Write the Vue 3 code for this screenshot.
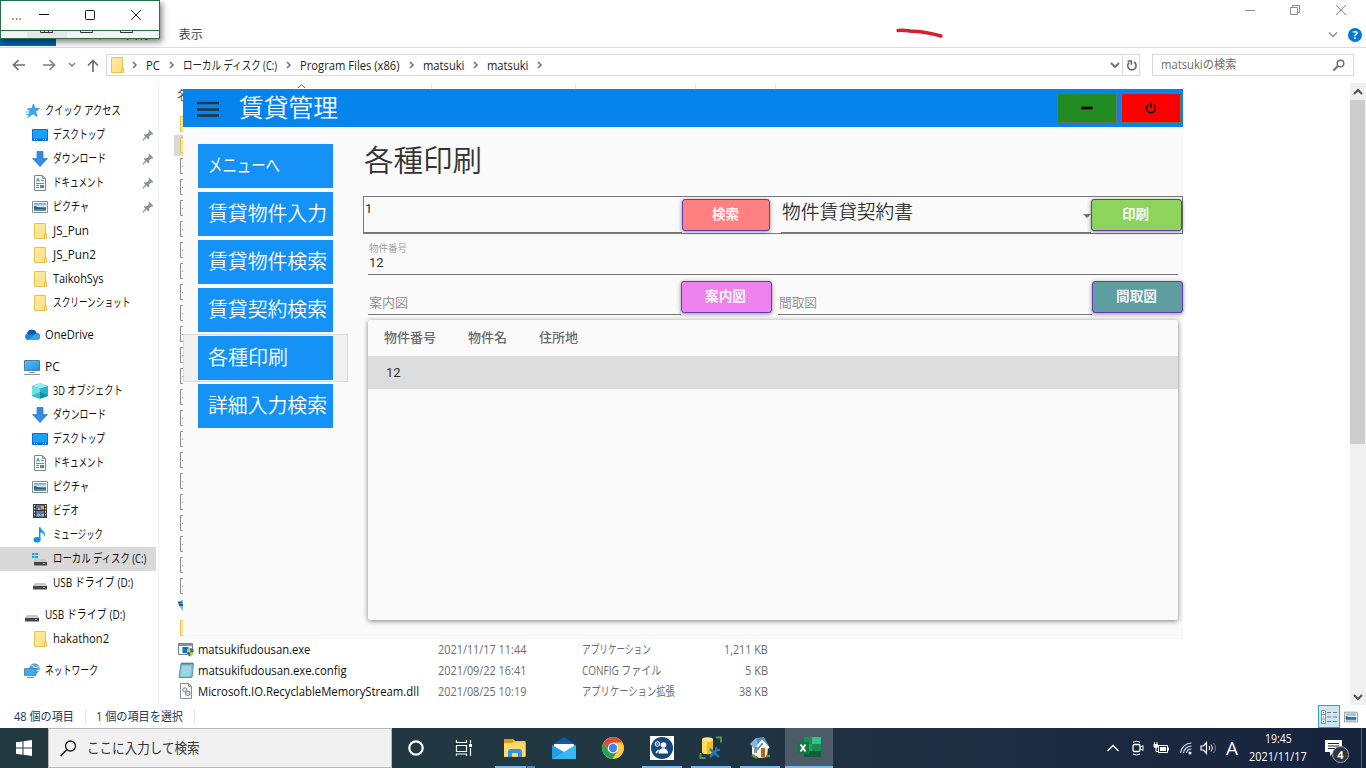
<script setup>
// v-fit="n": condenses or widens a label so that it is n pixels wide.
const vFit = {
  mounted(el, { value }) {
    if (!value) return
    const natural = el.offsetWidth
    el.style.transform = `scaleX(${value / natural})`
    el.style.marginRight = `${value - natural}px`
  },
}

const crumbs = [
  { t: 'PC', w: 14 },
  { t: 'ローカル ディスク (C:)', w: 94 },
  { t: 'Program Files (x86)', w: 100 },
  { t: 'matsuki', w: 41 },
  { t: 'matsuki', w: 41 },
]

const nav = [
  { t: 'クイック アクセス', w: 76, i: 'star', top: true },
  { t: 'デスクトップ', w: 52, i: 'desktop', pin: true },
  { t: 'ダウンロード', w: 53, i: 'down', pin: true },
  { t: 'ドキュメント', w: 51, i: 'doc', pin: true },
  { t: 'ピクチャ', w: 36, i: 'pic', pin: true },
  { t: 'JS_Pun', w: 36, i: 'folder' },
  { t: 'JS_Pun2', w: 43, i: 'folder' },
  { t: 'TaikohSys', w: 51, i: 'folder' },
  { t: 'スクリーンショット', w: 77, i: 'folder' },
  { t: 'OneDrive', w: 49, i: 'cloud', top: true, gap: true },
  { t: 'PC', w: 15, i: 'pc', top: true, gap: true },
  { t: '3D オブジェクト', w: 70, i: 'cube' },
  { t: 'ダウンロード', w: 53, i: 'down' },
  { t: 'デスクトップ', w: 52, i: 'desktop' },
  { t: 'ドキュメント', w: 51, i: 'doc' },
  { t: 'ピクチャ', w: 36, i: 'pic' },
  { t: 'ビデオ', w: 26, i: 'video' },
  { t: 'ミュージック', w: 50, i: 'music' },
  { t: 'ローカル ディスク (C:)', w: 93, i: 'cdrive', sel: true },
  { t: 'USB ドライブ (D:)', w: 80, i: 'drive' },
  { t: 'USB ドライブ (D:)', w: 80, i: 'drive', top: true, gap: true },
  { t: 'hakathon2', w: 56, i: 'folder' },
  { t: 'ネットワーク', w: 53, i: 'network', top: true, gap: true },
]

const hidden = Array.from({ length: 25 }, (_, k) => {
  if (k < 2 || k === 24) return 'folder'
  return k === 23 ? 'gem' : 'file'
})
const files = [
  { i: 'exe', n: 'matsukifudousan.exe', nw: 112, d: '2021/11/17 11:44', t: 'アプリケーション', tw: 69, s: '1,211 KB', sw: 44 },
  { i: 'note', n: 'matsukifudousan.exe.config', nw: 149, d: '2021/09/22 16:41', t: 'CONFIG ファイル', tw: 79, s: '5 KB', sw: 23 },
  { i: 'dll', n: 'Microsoft.IO.RecyclableMemoryStream.dll', nw: 221, d: '2021/08/25 10:19', t: 'アプリケーション拡張', tw: 93, s: '38 KB', sw: 29 },
]

const menu = [
  { t: 'メニューへ', w: 72 },
  { t: '賃貸物件入力', w: 119 },
  { t: '賃貸物件検索', w: 119 },
  { t: '賃貸契約検索', w: 119 },
  { t: '各種印刷', w: 80, on: true },
  { t: '詳細入力検索', w: 119 },
]

const tasks = [
  { i: 'cortana' },
  { i: 'taskview' },
  { i: 'explorer', run: true, multi: true },
  { i: 'mail' },
  { i: 'chrome' },
  { i: 'people', run: true },
  { i: 'db', run: true },
  { i: 'house', run: true },
  { i: 'excel', active: true },
]
</script>

<template>
  <div class="desk">
    <svg class="defs" width="0" height="0">
      <defs>
        <linearGradient id="gf" x1="0" y1="0" x2="1" y2="1"><stop offset="0" stop-color="#ffeaa0" /><stop offset="1" stop-color="#ffdf80" /></linearGradient>
        <linearGradient id="gb" x1="0" y1="0" x2="1" y2="1"><stop offset="0" stop-color="#5fc0f8" /><stop offset="1" stop-color="#1690e8" /></linearGradient>
        <linearGradient id="gp" x1="0" y1="0" x2="0" y2="1"><stop offset="0" stop-color="#5ba7e8" /><stop offset=".45" stop-color="#dcecf5" /><stop offset=".6" stop-color="#386c78" /><stop offset="1" stop-color="#5f9fc9" /></linearGradient>
      </defs>
      <symbol id="folder" viewBox="0 0 16 16"><path d="M2.500.5h11v10.500h1v4.500h-12z" fill="url(#gf)" stroke="#e8c34e" /><path d="M12.500 15.500v-4.500h2" fill="none" stroke="#e8c34e" /></symbol>
      <symbol id="star" viewBox="0 0 16 16"><path d="M9.500 1l1.200 4.500 4.800-.1-4 3 1.700 5.100-4.200-2.700-4.500 3.200 1.600-5.300L4 5.700l4.100-.2z" fill="#35aaf0" stroke="#1983cc" stroke-width=".7" /><path d="M2.500 6.500H6M1.500 9H6M2 11.500h3M3 14h2" stroke="#54b8f4" /></symbol>
      <symbol id="desktop" viewBox="0 0 16 16"><path d="M.5 2.500h15v11H.5z" fill="#18a1f5" stroke="#0874c8" /><path d="M1 11.500h14v2H1z" fill="#086fb9" /><path d="M2 12.500h1m1 0h1m6 0h1m1 0h1" stroke="#a8ddff" /></symbol>
      <symbol id="down" viewBox="0 0 16 16"><path d="M5 .5h6v7h4.500L8 15.500.5 7.500H5z" fill="#318ddf" stroke="#2876c4" stroke-width=".7" /></symbol>
      <symbol id="doc" viewBox="0 0 16 16"><path d="M2.500.5h8l3 3v12h-11z" fill="#fff" stroke="#868686" /><path d="M10.500.5v3h3" fill="none" stroke="#888" /><path d="M4.500 6.500l1.500-3.500 1.500 3.500m-2.500-1h2M9 5.500h3M4 8.500h8M4 10.500h3M4 12.500h3" stroke="#3a8bc8" fill="none" stroke-width=".9" /><path d="M8 10h4v3H8z" fill="#4a86a8" /></symbol>
      <symbol id="pic" viewBox="0 0 16 16"><path d="M.5 2.500h15v11H.5z" fill="#fff" stroke="#8d8d8d" /><path d="M2 4h12v8H2z" fill="url(#gp)" /><path d="M2 7c3 0 4 2 7 2h5v1H2z" fill="#2f6370" /></symbol>
      <symbol id="cloud" viewBox="0 0 16 16"><path d="M3.500 13A3.500 3.500 0 0 1 3 6.500 5 5 0 0 1 12.500 6 3.500 3.500 0 0 1 13 13z" fill="#1687dc" /><path d="M3 6.500A5 5 0 0 1 12.500 6l-5 2z" fill="#0a59af" /><path d="M4 13l7-5.500c3-1 5 1 5 3A3 3 0 0 1 13 13z" fill="#31a8ee" /></symbol>
      <symbol id="pc" viewBox="0 0 16 16"><path d="M.5 1.500h15v10H.5z" fill="url(#gb)" stroke="#527f9d" /><path d="M5 13.500h6M0 15.500h16" stroke="#8996a0" /></symbol>
      <symbol id="cube" viewBox="0 0 16 16"><path d="M0 3l8-2.800L16 3v10l-8 2.800L0 13z" fill="#26b5c8" /><path d="M0 3l8-2.800L16 3 8 5.500z" fill="#9ce9ec" /><path d="M0 3l8 2.500V15.800L0 13z" fill="#6fe0e8" /><path d="M8 9l8 3.500v.5l-8 2.800z" fill="#138ca7" /><path d="M0 12.500L8 9v6.800L0 13z" fill="#3cb9cb" /></symbol>
      <symbol id="video" viewBox="0 0 16 16"><path d="M1 1h14v14H1z" fill="#3b3b3b" /><path d="M4 2h8v5H4z" fill="#4770c7" /><path d="M4 8h8v6H4z" fill="#4d76bb" /><path d="M6 5h2v2H6zm3-2h3v3H9zM5 11h3v2H5zm4 0h3v2H9z" fill="#e1ac27" /><path d="M2.500 2v12M13.500 2v12" stroke="#f4f4f4" stroke-dasharray="1.500 1.500" /></symbol>
      <symbol id="music" viewBox="0 0 16 16"><ellipse cx="5" cy="12.800" rx="3.500" ry="2.800" fill="#0d94ea" /><path d="M7 .3h1.500c.5 4 6.500 4 3.800 10 .3-3.500-1.800-4.500-3.800-5v7.500H7z" fill="#0d94ea" /></symbol>
      <symbol id="drive" viewBox="0 0 16 16"><path d="M3 8h10l2 3H1z" fill="#c7cacb" /><path d="M1 11h14v3.500H1z" fill="#434749" /><path d="M11 12.500h2" stroke="#58da7b" /></symbol>
      <symbol id="cdrive" viewBox="0 0 16 16"><path d="M3 8h10l2 3H1z" fill="#c7cacb" /><path d="M2 11h13v3.500H2z" fill="#434749" /><path d="M11 12.500h2" stroke="#58da7b" /><path d="M0 2h2.500v2H0zm3.200 0H6v2H3.200zM0 5h2.500v2H0zm3.200 0H6v2.300H3.200z" fill="#16a5ee" /></symbol>
      <symbol id="network" viewBox="0 0 16 16"><circle cx="10.500" cy="5.500" r="5.200" fill="#5ba3cf" /><path d="M7 2c3 0 2 2.500 4 2.500s3-1 4-.5M12 8c1-1 2 0 3-1" stroke="#c5e4f0" fill="none" stroke-width="1.200" /><path d="M.5 5.500h11.500v7H.5z" fill="#39aef2" stroke="#4d7d9e" stroke-width=".8" /><path d="M3 14.500h7" stroke="#738997" /></symbol>
      <symbol id="pin" viewBox="0 0 12 12"><path d="M7.300.8l4 4-.9.900-1.200-.2-2 2 .1 2-1 1-4.500-4.500 1-1 2.200.1 1.900-1.900-.4-1.600z" fill="#89939c" /><path d="M4 8L.8 11.300" stroke="#89939c" stroke-width="1.200" /></symbol>
      <symbol id="file" viewBox="0 0 16 16"><path d="M2.500.5h8l3 3v12h-11z" fill="#fff" stroke="#8c8c8c" /><path d="M4 8.500h6" stroke="#888" /></symbol>
      <symbol id="gem" viewBox="0 0 16 16"><path d="M0 5l4-4h8l3 3-7 11-4-4z" fill="#7fb4dc" /><path d="M0 3.500h4M1 6h4" stroke="#2d5f92" stroke-width="1.800" /></symbol>
      <symbol id="exe" viewBox="0 0 16 16"><path d="M.5 2.500h14v11H.5z" fill="#f5f5f5" stroke="#75818b" /><path d="M1 3h13v2H1z" fill="#89959e" /><path d="M4.500 6h6v6h-6z" fill="#0b72cf" /><path d="M9 8l3-1 3.500 1v3c0 2-1 3.500-3.500 4.500-2-1-3-2.500-3-4.500z" fill="#f4bd26" /><path d="M12.200 7l3.300 1v3.200h-3.300zM9 11.200h3.200v4.200c-2-1-3.200-2.200-3.200-4.200z" fill="#1679bc" /></symbol>
      <symbol id="note" viewBox="0 0 16 16"><path d="M3 1.500h12.500l-1.500 14H1z" fill="#81c5d3" stroke="#4f99aa" /><path d="M4 5h9M4 7h9M3.500 9h9M3 11h9M3 13h9" stroke="#b8e7ee" /><path d="M4 .3v2.500m2-2.500v2.500m2-2.500v2.500m2-2.500v2.500m2-2.500v2.500m2-2.500v2.500" stroke="#52666b" stroke-width=".8" /></symbol>
      <symbol id="dll" viewBox="0 0 16 16"><path d="M2.500.5h8l3 3v12h-11z" fill="#fff" stroke="#8c8c8c" /><path d="M10.500.5v3h3" stroke="#8c8c8c" fill="none" /><circle cx="6.800" cy="6.800" r="2" fill="#dfe8ee" stroke="#95a3ae" stroke-width="1.200" /><circle cx="9.800" cy="10.300" r="2.200" fill="#dfe8ee" stroke="#8398a8" stroke-width="1.200" /></symbol>

      <symbol id="cortana" viewBox="0 0 24 24"><circle cx="12" cy="12" r="6.700" fill="none" stroke="#fff" stroke-width="2.200" /></symbol>
      <symbol id="taskview" viewBox="0 0 24 24"><path d="M4.500 4v2.500h10V4M4.500 9.500h10v6h-10zM4.500 20v-2h10v2M18.500 4v3.500m0 4.500v8" fill="none" stroke="#fff" stroke-width="1.200" /><path d="M17 8h3v3h-3z" fill="#fff" /></symbol>
      <symbol id="explorer" viewBox="0 0 24 24"><path d="M1 3h9l2 2h10.500v16H1z" fill="#ffca43" /><path d="M1 3h8l2 2-2 2H1z" fill="#dc9b10" /><path d="M1 7h21.500v13H1z" fill="#ffda72" /><path d="M5 21v-5q0-3 3-3h8q3 0 3 3v5h-4v-4H9v4z" fill="#2e96e6" /></symbol>
      <symbol id="mail" viewBox="0 0 24 24"><path d="M0 9l12-8 12 8v3H0z" fill="#0a5ca9" /><path d="M2 8h20v9H2z" fill="#fff" /><path d="M0 9l12 7L24 9v14H0z" fill="#239be4" /><path d="M0 23L24 9v14z" fill="#39b7f4" /></symbol>
      <symbol id="chrome" viewBox="0 0 24 24"><circle cx="12" cy="12" r="11" fill="#ffcd3f" /><path d="M2.500 6.500A11 11 0 0 1 21.500 6.500H12l-5 8z" fill="#dd4c3d" /><path d="M2.500 6.500A11 11 0 0 0 11.500 23l5-8.300L12 17l-5-2.500z" fill="#24a15c" /><circle cx="12" cy="12" r="5.300" fill="#fff" /><circle cx="12" cy="12" r="4.200" fill="#4484ed" /></symbol>
      <symbol id="people" viewBox="0 0 24 24"><path d="M0 0h24v24H0z" fill="#fff" /><circle cx="12" cy="12" r="11" fill="#14497c" /><circle cx="13.500" cy="9" r="2.800" fill="#fff" /><path d="M8.500 17.500c0-7 9.500-7 9.500 0z" fill="#fff" /><circle cx="7.500" cy="8" r="2.300" fill="none" stroke="#fff" /><path d="M6.500 8h2" stroke="#fff" /><path d="M6 17l2.500-3" stroke="#fff" stroke-width="1.500" /></symbol>
      <symbol id="db" viewBox="0 0 24 24"><path d="M3 3v13c0 3 11 3 11 0V3z" fill="#f2bd1b" /><path d="M3 4v12c0 2 4 2 5 2V5z" fill="#ffe05b" /><ellipse cx="8.500" cy="3.500" rx="5.500" ry="2.300" fill="#ffe783" /><path d="M17 1.500h5v5M1.500 17v5h5" stroke="#519746" stroke-width="2" fill="none" /><path d="M11 13l9 8M19 13l-8 8" stroke="#2178bb" stroke-width="2.500" /><path d="M17 11v3h4" fill="none" stroke="#2178bb" stroke-width="2" /></symbol>
      <symbol id="house" viewBox="0 0 24 24"><path d="M4 10l12-3 4 5-1 9-8 1-7-4z" fill="#fff1dc" /><path d="M2 8l6-6 8-1 5 9-5-3-7 8z" fill="#5390c8" /><path d="M2 8l6-6 2 7-4 3z" fill="#85b6dc" /><path d="M9 11l5-6 7 7" fill="none" stroke="#fff" stroke-width="2" /><path d="M13 12h4v9h-4z" fill="#b96227" /><path d="M6 13h3v4H6z" fill="#8a96a0" /><path d="M4 19l5 3M18 20h4" stroke="#51a043" stroke-width="2.500" /></symbol>
      <symbol id="excel" viewBox="0 0 24 24"><path d="M7 1h17v20H7z" fill="#21a366" /><path d="M7 1h8v7H7z" fill="#169154" /><path d="M15 1h9v7h-9z" fill="#33c481" /><path d="M15 8h9v7h-9z" fill="#188c54" /><path d="M7 15h17v6H7z" fill="#125e3c" /><path d="M0 6h12v12H0z" fill="#107c41" /><path d="M3.500 8.500l5 7m0-7l-5 7" stroke="#fff" stroke-width="1.800" /></symbol>
    </svg>

    <section class="explorer">
      <header class="ribbon">
        <div class="sysbtns">
          <svg width="12" height="12"><path d="M1 6.500h10" stroke="#8a8a8a" /></svg>
          <svg width="12" height="12"><path d="M1.500 3.500h7v7h-7zM3.500 3.500v-2h7v7h-2" stroke="#8a8a8a" fill="none" /></svg>
          <svg width="12" height="12"><path d="M1 1l10 10M11 1L1 11" stroke="#8a8a8a" /></svg>
        </div>
        <div class="tabs">
          <div class="filetab"><span v-fit="38">ファイル</span></div>
          <span class="t1" v-fit="28">ホーム</span>
          <span class="t2" v-fit="24">共有</span>
          <span v-fit="24">表示</span>
          <svg class="stroke" width="50" height="12"><path d="M3 2.500c6-1 10 .5 16 .8s16 1.700 27 4.700" stroke="#e01b2b" stroke-width="3.400" fill="none" stroke-linecap="round" /></svg>
          <div class="helpers">
            <svg width="10" height="6"><path d="M1 .5l4 4 4-4" stroke="#8c8c8c" stroke-width="1.300" fill="none" /></svg>
            <span class="help">?</span>
          </div>
        </div>
      </header>

      <div class="address">
        <div class="arrows">
          <svg width="14" height="12"><path d="M1.500 6H13M6.500 1l-5 5 5 5" stroke="#707070" stroke-width="1.700" fill="none" /></svg>
          <svg width="14" height="12"><path d="M1 6h11.500M7.500 1l5 5-5 5" stroke="#808080" stroke-width="1.700" fill="none" /></svg>
          <svg width="8" height="6"><path d="M1 1l3 3 3-3" stroke="#808080" stroke-width="1.500" fill="none" /></svg>
          <svg width="12" height="13"><path d="M6 1.500V13M1 6.500l5-5 5 5" stroke="#707070" stroke-width="1.700" fill="none" /></svg>
        </div>
        <div class="path">
          <svg width="16" height="16"><use href="#folder" /></svg>
          <template v-for="(c, k) in crumbs" :key="k">
            <svg class="chev" width="6" height="8"><path d="M1 1l3 3-3 3" stroke="#707070" stroke-width="1.500" fill="none" /></svg>
            <span v-fit="c.w">{{ c.t }}</span>
          </template>
          <svg class="chev" width="6" height="8"><path d="M1 1l3 3-3 3" stroke="#707070" stroke-width="1.500" fill="none" /></svg>
          <div class="pathend">
            <svg width="10" height="7"><path d="M1 1l4 4 4-4" stroke="#707070" stroke-width="1.900" fill="none" /></svg>
            <i></i>
            <svg width="12" height="13"><path d="M8 3a4.200 4.200 0 1 1-5 .6M1.500 2h3.800v3.800" stroke="#606060" stroke-width="1.500" fill="none" /></svg>
          </div>
        </div>
        <div class="find">
          <span v-fit="75">matsukiの検索</span>
          <svg width="12" height="12"><circle cx="7.500" cy="4.500" r="3.300" fill="none" stroke="#707070" stroke-width="1.500" /><path d="M5 7l-4.500 4.500" stroke="#707070" stroke-width="2" /></svg>
        </div>
      </div>

      <div class="body">
        <nav class="tree">
          <div v-for="(n, k) in nav" :key="k" class="node" :class="{ top: n.top, gap: n.gap, sel: n.sel }">
            <svg width="16" height="16"><use :href="'#' + n.i" /></svg>
            <span v-fit="n.w">{{ n.t }}</span>
            <svg v-if="n.pin" class="pin" width="12" height="12"><use href="#pin" /></svg>
          </div>
        </nav>
        <div class="list">
          <div class="heads">
            <span class="nm" v-fit="24">名前</span>
            <svg width="9" height="6"><path d="M1 5l3.500-3.500L8 5" stroke="#555" fill="none" /></svg>
            <i></i><i></i><i></i><i></i>
          </div>
          <div v-for="(h, k) in hidden" :key="'h' + k" class="row" :class="{ hit: k === 1 }">
            <svg width="16" height="16"><use :href="'#' + h" /></svg>
          </div>
          <div v-for="f in files" :key="f.n" class="row">
            <svg width="16" height="16"><use :href="'#' + f.i" /></svg>
            <div class="name"><span v-fit="f.nw">{{ f.n }}</span></div>
            <div class="cell"><span v-fit="88">{{ f.d }}</span></div>
            <div class="cell"><span v-fit="f.tw">{{ f.t }}</span></div>
            <div class="size"><span v-fit="f.sw">{{ f.s }}</span></div>
          </div>
          <div class="row last"><svg width="16" height="16"><use href="#file" /></svg></div>
        </div>
        <div class="scroll">
          <svg width="16" height="17"><path d="M4 11l4-4 4 4" stroke="#505050" stroke-width="2" fill="none" /></svg>
          <div class="thumb"></div>
          <svg class="sd" width="16" height="16"><path d="M4 6l4 4 4-4" stroke="#505050" stroke-width="2" fill="none" /></svg>
        </div>
      </div>

      <footer class="status">
        <span v-fit="60">48 個の項目</span><i></i>
        <span v-fit="87">1 個の項目を選択</span><i></i>
        <div class="views">
          <div class="von"><svg width="16" height="14"><path d="M.5.500h4v13h-4zM.5 4.500h4M.5 9h4" stroke="#8a8a8a" fill="#fff" /><path d="M6 2.500h4m2 0h4M6 7h4m2 0h4M6 11.500h4m2 0h4" stroke="#777" /><path d="M2 2.500h1" stroke="#2a9a50" /><path d="M2 7h1" stroke="#278be6" /><path d="M2 11.500h1" stroke="#d33" /></svg></div>
          <svg width="14" height="14"><use href="#pic" /></svg>
        </div>
      </footer>
    </section>

    <section class="app">
      <header class="bar">
        <svg width="24" height="18"><path d="M1 3h22M1 9.500h22M1 15.500h22" stroke="#2d3135" stroke-width="2.400" /></svg>
        <h1><span v-fit="99">賃貸管理</span></h1>
        <button class="min"><svg width="12" height="4"><path d="M.5 2h11" stroke="#000" stroke-width="2.600" /></svg></button>
        <button class="off"><svg width="12" height="12"><path d="M3.500 2.500a4.500 4.500 0 1 0 5 0M6 .5v5.500" stroke="#000" stroke-width="1.400" fill="none" /></svg></button>
      </header>
      <div class="main">
        <aside>
          <div v-for="m in menu" :key="m.t" class="mi" :class="{ on: m.on }">
            <div class="mb"><span v-fit="m.w">{{ m.t }}</span></div>
          </div>
        </aside>
        <div class="pane">
          <h2><span v-fit="118">各種印刷</span></h2>
          <div class="query">
            <div class="in one">1</div>
            <button class="b red"><span v-fit="27">検索</span></button>
            <div class="in combo"><span v-fit="131">物件賃貸契約書</span><svg width="8" height="4"><path d="M0 0h8L4 4z" fill="#757575" /></svg></div>
            <button class="b green"><span v-fit="27">印刷</span></button>
          </div>
          <div class="field">
            <label><span v-fit="38">物件番号</span></label>
            <div>12</div>
          </div>
          <div class="maps">
            <div class="mf a"><span v-fit="39">案内図</span></div>
            <button class="b violet"><span v-fit="41">案内図</span></button>
            <div class="mf c"><span v-fit="38">間取図</span></div>
            <button class="b teal"><span v-fit="41">間取図</span></button>
          </div>
          <div class="card">
            <div class="th"><span v-fit="52">物件番号</span><span v-fit="39">物件名</span><span v-fit="39">住所地</span></div>
            <div class="tr">12</div>
          </div>
        </div>
      </div>
    </section>

    <section class="mini">
      <div class="mt">
        <span>...</span>
        <svg width="12" height="12"><path d="M1 5.500h10" stroke="#111" /></svg>
        <svg width="12" height="12"><rect x="1.500" y="1.500" width="9" height="9" rx="1" stroke="#111" fill="none" /></svg>
        <svg width="12" height="12"><path d="M1 1l10 10M11 1L1 11" stroke="#222" /></svg>
      </div>
      <div class="ms">
        <div class="mk"><svg width="14" height="3"><path d="M.5 0v1.500h12V0M4.500 0v1.500M8.500 0v1.500" stroke="#333" fill="none" /></svg></div>
        <svg width="14" height="3"><path d="M.5 0v1.500h12V0" stroke="#333" fill="none" /></svg>
        <svg width="14" height="3"><path d="M.5 0v1.500h12V0" stroke="#333" fill="none" /></svg>
      </div>
    </section>

    <footer class="taskbar">
      <div class="start"><svg width="16" height="16"><path d="M0 2.300L6.500 1.400V7.500H0zM7.500 1.200L16 0v7.500H7.500zM0 8.500h6.500v6.200L0 13.700zM7.500 8.500H16V16l-8.500-1.200z" fill="#fff" /></svg></div>
      <div class="search">
        <svg width="17" height="17"><circle cx="10.500" cy="6" r="5" fill="none" stroke="#1b1b1b" stroke-width="1.300" /><path d="M7 9.500L.7 16" stroke="#1b1b1b" stroke-width="1.500" /></svg>
        <span v-fit="113">ここに入力して検索</span>
      </div>
      <div class="tasks">
        <div v-for="t in tasks" :key="t.i" class="task" :class="[t.i, { run: t.run, active: t.active }]">
          <svg width="24" height="24"><use :href="'#' + t.i" /></svg>
          <i v-if="t.multi"></i>
        </div>
      </div>
      <div class="tray">
        <svg width="14" height="8"><path d="M1.500 7L7 1.500 12.500 7" stroke="#fff" stroke-width="1.300" fill="none" /></svg>
        <svg width="12" height="16"><rect x="1" y="4.500" width="7" height="7" rx="1.500" stroke="#fff" stroke-width="1.300" fill="none" /><path d="M8 7.500l3-2v5l-3-2M1 2.200q3.500-2 7 0M1 14q3.500 2 7 0" stroke="#fff" fill="none" /></svg>
        <svg width="16" height="12"><path d="M5.500 3.500h9v7h-9zM15.500 5.500v3" stroke="#fff" fill="none" /><path d="M7 5h6v4H7zM.5 2h4.500v3L3 6.500.5 5z" fill="#fff" /><path d="M1.500 0v2M4 0v2M3 6v3.500h2" stroke="#fff" fill="none" /></svg>
        <svg width="14" height="14"><path d="M1.500 12A11 11 0 0 1 12.500 2M4.500 12A8 8 0 0 1 12.500 5M7.500 12A5 5 0 0 1 12.500 8" stroke="#d7dce4" stroke-width="1.200" fill="none" /><circle cx="11" cy="12" r="1.500" fill="#fff" /></svg>
        <svg width="17" height="14"><path d="M1 5h2.500l3-3.500v11L3.500 9H1z" stroke="#fff" fill="none" stroke-width="1.200" /><path d="M9 5q1.500 2 0 4M11 3.500q3 3.500 0 7" stroke="#fff" fill="none" /><path d="M13.500 2q4 5 0 10" stroke="#7b8495" fill="none" /></svg>
        <span class="ime">A</span>
        <div class="clock"><span v-fit="27">19:45</span><span v-fit="58">2021/11/17</span></div>
        <div class="note">
          <svg width="17" height="16"><path d="M0 0h17v12H9l-4 4v-4H0z" fill="#fff" /><path d="M3 3.500h11M3 6h11M3 8.500h7" stroke="#18243c" /></svg>
          <b>4</b>
        </div>
        <i></i>
      </div>
    </footer>
  </div>
</template>

<style>
html, body { margin: 0; overflow: hidden; background: #fff; }
</style>

<style scoped>
* { box-sizing: border-box; }
svg { display: block; flex: none; }
button { font: inherit; margin: 0; padding: 0; border: 0; display: flex; align-items: center; justify-content: center; flex: none; }
span { display: inline-block; white-space: nowrap; transform-origin: 0 50%; flex: none; }
.desk { position: relative; width: 1366px; height: 768px; overflow: hidden; display: flex; flex-direction: column; font: 12px/16px "Open Sans", "Noto Sans CJK JP", sans-serif; color: #111; background: #fff; }
.defs { position: absolute; }

.explorer { height: 728px; display: flex; flex-direction: column; }
.ribbon { height: 48px; border-bottom: 1px solid #dadbdc; flex: none; }
.sysbtns { height: 23px; display: flex; justify-content: flex-end; gap: 34px; padding: 4px 19px 0 0; }
.sysbtns svg:first-child { margin-right: -1px; }
.tabs { height: 24px; display: flex; align-items: center; padding-right: 4px; color: #444; }
.filetab { width: 56px; height: 23px; background: #0063b1; color: #fff; padding: 3px 9px; margin-right: 17px; align-self: flex-start; }
.t1 + .t2 { margin-left: 25px; }
.t2 + span { margin-left: 29px; }
.stroke { margin: -2px 0 0 692px; }
.helpers { margin-left: auto; display: flex; align-items: center; gap: 10px; }
.help { width: 14px; height: 14px; border-radius: 50%; background: #0078d7; color: #fff; font-weight: 700; font-size: 11px; line-height: 14px; text-align: center; }
.address { height: 35px; padding: 6px 12px 7px 12px; display: flex; flex: none; }
.arrows { width: 94px; display: flex; align-items: center; }
.arrows svg:nth-child(2) { margin-left: 16px; }
.arrows svg:nth-child(3) { margin-left: 12px; }
.arrows svg:nth-child(4) { margin-left: 11px; }
.path { width: 1034px; height: 22px; border: 1px solid #d9d9d9; display: flex; align-items: center; padding-left: 2px; color: #222; }
.path > span { position: relative; top: 1px; }
.chev { margin: 0 8px 0 9px; }
.path > svg:first-child { margin: 0 -2px 0 0; }
.pathend { margin-left: auto; display: flex; align-items: center; height: 100%; }
.pathend i { width: 1px; height: 20px; background: #d9d9d9; margin: 0 3px 0 2px; }
.pathend svg:last-child { margin-right: 1px; }
.find { width: 202px; height: 22px; margin-left: 12px; border: 1px solid #d9d9d9; display: flex; align-items: center; justify-content: space-between; padding: 0 8px 0 8px; color: #6d6d6d; }
.body { height: 622px; display: flex; flex: none; }
.tree { width: 159px; border-right: 1px solid #f0f0f0; padding-top: 16px; flex: none; }
.node { width: 156px; height: 24px; padding-left: 32px; display: flex; align-items: center; gap: 5px; }
.node.top { padding-left: 24px; }
.node.gap { margin-top: 8px; }
.node.sel { background: #d9d9d9; }
.pin { margin: 0 2px 0 auto; }
.list { width: 1191px; padding-left: 15px; overflow: hidden; }
.heads { height: 31px; display: flex; padding-left: 3px; color: #555; }
.nm { margin-top: 5px; }
.heads svg { margin-left: 96px; }
.heads i { width: 1px; height: 22px; background: #e5e5e5; margin-left: 143px; }
.heads svg + i { margin-left: 125px; }
.heads i:nth-of-type(3) { margin-left: 119px; }
.heads i:nth-of-type(4) { margin-left: 79px; }
.row { height: 21px; display: flex; align-items: center; padding-left: 4px; color: #6d6d6d; }
.row > svg { margin-top: -1px; }
.row.last > svg { margin-top: 1px; }
.row.hit { background: #d9d9d9; width: 500px; }
.name { width: 240px; margin-left: 4px; color: #111; }
.cell { width: 144px; }
.size { width: 42px; display: flex; justify-content: flex-end; }
.scroll { width: 16px; background: #f0f0f0; display: flex; flex-direction: column; }
.thumb { width: 15px; height: 344px; background: #cdcdcd; }
.sd { margin-top: auto; }
.status { height: 23px; display: flex; align-items: center; padding: 0 8px 0 14px; color: #1d3a60; }
.status i { width: 1px; height: 14px; background: #e4e4e4; margin: 0 10px 0 11px; }
.views { margin-left: auto; display: flex; align-items: center; gap: 4px; }
.von { width: 22px; height: 23px; border: 1px solid #26a0da; background: #cce8f4; display: flex; align-items: center; justify-content: center; }

.app { position: absolute; left: 183px; top: 89px; width: 1000px; height: 550px; background: #fafafa; font-family: Roboto, "Noto Sans CJK JP", sans-serif; color: #333; }
.bar { height: 38px; background: #0584ee; display: flex; align-items: center; padding: 0 2px 0 13px; }
.bar > svg { margin-top: 2px; }
h1 { margin: 0 auto 0 19px; font-size: 25px; line-height: 40px; font-weight: 350; color: #fff; height: 38px; }
.bar button { width: 60px; height: 30px; border: 1px solid #70705f; margin-left: 4px; }
.min { background: #228b22; }
.off { background: #f00; }
.main { display: flex; }
aside { width: 165px; padding-top: 15px; }
.mi { height: 48px; padding: 2px 15px; }
.mi.on { background: #f0f0f0; outline: 1px solid #dadada; outline-offset: -1px; }
.mb { width: 135px; height: 44px; background: #1492f5; color: #fff; font-size: 20px; line-height: 44px; padding-left: 10px; font-weight: 350; }
.pane { width: 835px; padding-left: 15px; }
h2 { margin: 0; height: 69px; padding: 16px 0 0 1px; font-size: 30px; line-height: 36px; font-weight: 350; color: #333; }
.query { width: 820px; height: 38px; border: 1px solid #7a7a7a; display: flex; padding-top: 2px; }
.in { border-bottom: 1px solid #757575; height: 34px; }
.one { width: 318px; padding: 2px 0 0 1px; font-size: 13px; line-height: 16px; }
.b { height: 32px; border: 1px solid #673ab7; border-radius: 3px; color: #fff; font-weight: 700; font-size: 14px; box-shadow: 0 1px 4px rgba(0, 0, 0, .45); }
.b span { position: relative; top: -1px; left: -1px; opacity: .9; }
.red { width: 88px; background: #ff8080; }
.combo { width: 310px; margin-left: 11px; display: flex; justify-content: space-between; align-items: center; padding: 0 0 6px 1px; font-size: 19px; font-weight: 350; }
.combo svg { margin-top: 6px; }
.green { width: 91px; background: #8ed35e; }
.field { margin-left: 5px; width: 810px; height: 41px; border-bottom: 1px solid #757575; padding: 8px 0 0 1px; font-size: 13px; line-height: 16px; }
label { display: block; font-size: 10px; line-height: 13px; color: #9c9c9c; font-weight: 350; }
.maps { display: flex; height: 45px; padding: 5px 0 0 5px; }
.maps .b { margin-top: 1px; }
.mf { height: 35px; border-bottom: 1px solid #757575; font-size: 13px; line-height: 16px; padding: 15px 0 0 1px; color: #8b8b8b; font-weight: 350; }
.a { width: 313px; }
.c { width: 314px; margin-left: 5px; }
.violet { width: 91px; margin-right: 1px; background: #ee82ee; }
.teal { width: 91px; background: #5f9ea0; }
.card { margin-left: 5px; width: 810px; height: 300px; border-radius: 2px; background: #fafafa; box-shadow: 0 1px 5px rgba(0, 0, 0, .5); }
.th { height: 36px; display: flex; gap: 32px; align-items: center; padding-left: 16px; font-size: 13px; font-weight: 500; color: #6b6b6b; }
.tr { height: 33px; background: #ddd; padding-left: 18px; font-size: 13px; line-height: 33px; }

.mini { position: absolute; left: 0; top: 0; width: 160px; height: 39px; background: #fff; border: 1px solid #217346; box-shadow: 2px 3px 6px rgba(0, 0, 0, .5); }
.mt { height: 30px; border-bottom: 1px solid #217346; display: flex; align-items: center; padding: 0 0 2px 10px; gap: 34px; }
.mt span { width: 17px; margin-right: -24px; color: #8a6a30; font-size: 14px; }
.ms { height: 7px; background: #f3f3f3; display: flex; padding-left: 26px; gap: 26px; }
.mk { width: 40px; background: #e6e6e6; padding-left: 13px; margin-right: -13px; }

.taskbar { height: 40px; display: flex; color: #fff; background: linear-gradient(90deg, #21393f, #213743 45%, #1c2a40 78%, #16233d); }
.start { width: 48px; display: flex; align-items: center; justify-content: center; }
.search { width: 344px; background: #f1f1f1; border: 1px solid #b9b9b9; color: #333; display: flex; align-items: center; padding-left: 11px; font-size: 14px; }
.search span { margin-left: 10px; }
.tasks { display: flex; gap: 1px; }
.task { position: relative; width: 48px; height: 40px; display: flex; align-items: center; justify-content: center; }
.taskview { margin-left: -1px; }
.explorer.task { margin-left: 2px; flex-direction: row; }
.task.run::after, .task.active::after { content: ""; position: absolute; left: 4px; right: 4px; bottom: 0; height: 2px; background: #76b9ed; }
.task.active { background: #4c5b67; }
.task.active::after { left: 0; right: 0; }
.task i { position: absolute; z-index: 1; right: 4px; bottom: 0; width: 9px; height: 2px; background: #5586ab; border-left: 1px solid #213743; }
.tray { margin-left: auto; display: flex; align-items: center; }
.tray > svg:nth-child(2) { margin-left: 12px; }
.tray > svg:nth-child(3) { margin-left: 9px; }
.tray > svg:nth-child(4) { margin-left: 10px; }
.tray > svg:nth-child(5) { margin-left: 7px; }
.ime { margin-left: 9px; width: 12px; font-size: 19px; }
.clock { width: 60px; margin-left: 10px; display: flex; flex-direction: column; align-items: center; line-height: 18px; height: 40px; padding-top: 2px; }
.note { position: relative; margin-left: 17px; width: 26px; height: 16px; }
.note b { position: absolute; left: 7px; top: 6px; width: 17px; height: 17px; border-radius: 50%; border: 1px solid #98a0ac; background: #32353c; text-align: center; line-height: 15px; font-size: 11px; }
.tray > i { width: 1px; height: 40px; background: #56627a; margin: 0 4px 0 10px; }
</style>
